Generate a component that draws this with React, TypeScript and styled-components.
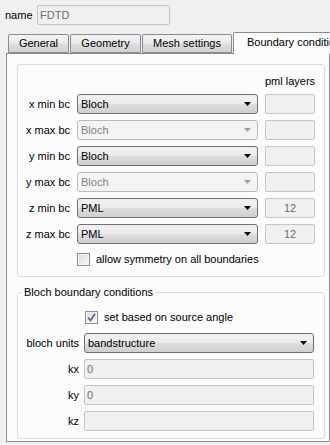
import React from 'react';
import styled, { createGlobalStyle } from 'styled-components';

const GlobalStyle = createGlobalStyle`
  html, body {
    margin: 0;
    padding: 0;
    background: #f0f0f0;
    overflow: hidden;
  }
  body {
    font-family: "Liberation Sans", Arial, sans-serif;
    font-size: 11px;
    color: #000;
  }
`;

const Window = styled.div`
  width: 330px;
  height: 445px;
  overflow: hidden;
  background: #f0f0f0;
`;

const NameRow = styled.div`
  display: flex;
  align-items: center;
  padding: 5px 0 0 5px;
`;

const NameLabel = styled.span`
  width: 32px;
  line-height: 13px;
`;

const LineEdit = styled.div<{ $w?: number; $center?: boolean }>`
  box-sizing: border-box;
  width: ${p => (p.$w ? `${p.$w}px` : '100%')};
  height: 20px;
  border: 1px solid #c5c5c5;
  border-radius: 2px;
  background: #f0f0f0;
  color: #6d6d6d;
  line-height: 18px;
  padding: 0 2px;
  text-align: ${p => (p.$center ? 'center' : 'left')};
  white-space: nowrap;
  overflow: hidden;
`;

const TabBar = styled.div`
  display: flex;
  align-items: flex-end;
  gap: 1px;
  height: 21px;
  margin-top: 7px;
  padding-left: 8px;
  position: relative;
  z-index: 1;
`;

const Tab = styled.div<{ $w: number; $active?: boolean }>`
  box-sizing: border-box;
  flex: none;
  width: ${p => p.$w}px;
  height: ${p => (p.$active ? 22 : 19)}px;
  margin-bottom: ${p => (p.$active ? -1 : 0)}px;
  border: 1px solid #898c95;
  border-bottom: ${p => (p.$active ? 'none' : '1px solid #898c95')};
  border-radius: 2px 2px 0 0;
  background: ${p =>
    p.$active
      ? '#fcfcfc'
      : 'linear-gradient(#f3f3f3 0%, #ebebeb 45%, #dddddd 55%, #d2d2d2 100%)'};
  line-height: ${p => (p.$active ? 19 : 17)}px;
  text-align: ${p => (p.$active ? 'left' : 'center')};
  padding-left: ${p => (p.$active ? 13 : 0)}px;
  white-space: nowrap;
  overflow: hidden;
`;

const Pane = styled.div`
  box-sizing: border-box;
  width: 324px;
  margin-left: 6px;
  border: 1px solid #898c95;
  background: #fcfcfc;
  padding: 10px 4px 2px 10px;
`;

const Group = styled.div`
  border: 1px solid #d5dfe5;
  border-radius: 3px;
  padding: 10px 0 10px 6px;
`;

const BcGrid = styled.div`
  display: grid;
  grid-template-columns: 46px 181px 50px;
  column-gap: 7px;
  row-gap: 6px;
  align-items: center;
`;

const HeaderCell = styled.div`
  grid-column: 3;
  text-align: center;
  line-height: 13px;
  white-space: nowrap;
`;

const RowLabel = styled.div`
  text-align: right;
  white-space: nowrap;
  line-height: 13px;
`;

const ComboBox = styled.div<{ $disabled?: boolean }>`
  box-sizing: border-box;
  height: 20px;
  display: flex;
  align-items: center;
  justify-content: space-between;
  padding: 0 6px 0 3px;
  border: 1px solid ${p => (p.$disabled ? '#b9bcbf' : '#707070')};
  border-radius: 3px;
  background: ${p =>
    p.$disabled
      ? '#f4f4f4'
      : 'linear-gradient(#f2f2f2 0%, #ebebeb 48%, #dddddd 52%, #cfcfcf 100%)'};
  color: ${p => (p.$disabled ? '#838383' : '#000')};
`;

const CheckRow = styled.div<{ $offset: number; $span: string; $mt: number; $mb: number }>`
  grid-column: ${p => p.$span};
  display: flex;
  align-items: center;
  gap: 6px;
  margin: ${p => p.$mt}px 0 ${p => p.$mb}px ${p => p.$offset}px;
  white-space: nowrap;
  line-height: 13px;
`;

const CheckBox = styled.div`
  box-sizing: border-box;
  flex: none;
  width: 13px;
  height: 13px;
  border: 1px solid #8e8f8f;
  background: linear-gradient(135deg, #dcdcdc, #f7f7f7);
  box-shadow: inset 0 0 0 1px #f4f4f4;
  display: flex;
  align-items: center;
  justify-content: center;
`;

const Fieldset = styled.fieldset`
  margin: 9px 0 0 0;
  min-width: 0;
  border: 1px solid #d5dfe5;
  border-radius: 3px;
  padding: 0 0 7px 6px;
`;

const Legend = styled.legend`
  margin-left: -2px;
  padding: 0 2px;
  line-height: 13px;
`;

const BlochGrid = styled.div`
  display: grid;
  grid-template-columns: 55px 230px;
  column-gap: 5px;
  row-gap: 6px;
  align-items: center;
  margin-top: 12px;
`;

const Arrow = ({ disabled }: { disabled?: boolean }) => (
  <svg width="7" height="4" viewBox="0 0 7 4">
    <polygon points="0,0 7,0 3.5,4" fill={disabled ? '#a0a0a0' : '#000'} />
  </svg>
);

const Check = () => (
  <svg width="9" height="9" viewBox="0 0 9 9">
    <path d="M1 4.5 L3.5 7.5 L8 0.8" fill="none" stroke="#4a5f97" strokeWidth="1.6" />
  </svg>
);

const Combo = ({ value, disabled }: { value: string; disabled?: boolean }) => (
  <ComboBox $disabled={disabled}>
    <span>{value}</span>
    <Arrow disabled={disabled} />
  </ComboBox>
);

const rows = [
  { label: 'x min bc', value: 'Bloch', disabled: false, pml: '' },
  { label: 'x max bc', value: 'Bloch', disabled: true, pml: '' },
  { label: 'y min bc', value: 'Bloch', disabled: false, pml: '' },
  { label: 'y max bc', value: 'Bloch', disabled: true, pml: '' },
  { label: 'z min bc', value: 'PML', disabled: false, pml: '12' },
  { label: 'z max bc', value: 'PML', disabled: false, pml: '12' },
];

export default function App() {
  return (
    <Window>
      <GlobalStyle />
      <NameRow>
        <NameLabel>name</NameLabel>
        <LineEdit $w={133}>FDTD</LineEdit>
      </NameRow>
      <TabBar>
        <Tab $w={61}>General</Tab>
        <Tab $w={71}>Geometry</Tab>
        <Tab $w={90}>Mesh settings</Tab>
        <Tab $w={120} $active>Boundary conditions</Tab>
      </TabBar>
      <Pane>
        <Group>
          <BcGrid>
            <HeaderCell>pml layers</HeaderCell>
            {rows.map(r => (
              <React.Fragment key={r.label}>
                <RowLabel>{r.label}</RowLabel>
                <Combo value={r.value} disabled={r.disabled} />
                <LineEdit $center>{r.pml}</LineEdit>
              </React.Fragment>
            ))}
            <CheckRow $offset={0} $span="2 / span 2" $mt={3} $mb={0}>
              <CheckBox />
              <span>allow symmetry on all boundaries</span>
            </CheckRow>
          </BcGrid>
        </Group>
        <Fieldset>
          <Legend>Bloch boundary conditions</Legend>
          <BlochGrid>
            <CheckRow $offset={1} $span="2" $mt={0} $mb={3}>
              <CheckBox>
                <Check />
              </CheckBox>
              <span>set based on source angle</span>
            </CheckRow>
            <RowLabel>bloch units</RowLabel>
            <Combo value="bandstructure" />
            <RowLabel>kx</RowLabel>
            <LineEdit>0</LineEdit>
            <RowLabel>ky</RowLabel>
            <LineEdit>0</LineEdit>
            <RowLabel>kz</RowLabel>
            <LineEdit></LineEdit>
          </BlochGrid>
        </Fieldset>
      </Pane>
    </Window>
  );
}
